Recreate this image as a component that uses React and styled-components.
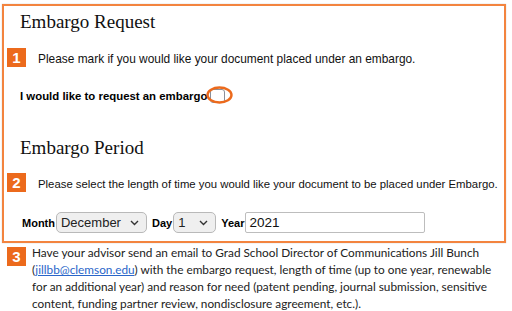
import React from 'react';
import styled, { createGlobalStyle } from 'styled-components';

const GlobalStyle = createGlobalStyle`
    body {
        margin: 0;
        background: #fff;
        font-family: "Liberation Sans", Arial, sans-serif;
        color: #000;
    }
`

const Page = styled.div`
    width: 512px;
    height: 311px;
    padding: 4px 6px 0 2px;
    box-sizing: border-box;
    overflow: hidden;
`

const Box = styled.section`
    border: 2px solid #f3843f;
    box-shadow: 0 0 1px rgba(0,0,0,0.25);
    padding: 5px 0 8px 3px;
    height: 239px;
    box-sizing: border-box;
`

const Heading = styled.h2`
    font-family: "Liberation Serif", "Times New Roman", serif;
    font-weight: normal;
    font-size: 19px;
    line-height: 22px;
    margin: ${p => p.top || 0}px 0 0 13px;
    color: #111;
`

const Step = styled.div`
    display: flex;
    align-items: center;
    gap: 12px;
    margin-top: ${p => p.top || 0}px;
`

const Badge = styled.span`
    display: inline-flex;
    align-items: center;
    justify-content: center;
    flex: none;
    width: 19px;
    height: 19px;
    background: #ec6a1c;
    color: #fff;
    font-family: "Liberation Sans", Arial, sans-serif;
    font-weight: bold;
    font-size: 15px;
`

const Instruction = styled.p`
    margin: 3px 0 0;
    font-size: ${p => p.size || 11.6}px;
    color: #111;
`

const CheckRow = styled.label`
    display: flex;
    align-items: center;
    margin: 22px 0 0 13px;
    font-size: 11.4px;
    font-weight: bold;
`

const CheckWrap = styled.span`
    position: relative;
    display: inline-block;
    width: 13px;
    height: 12px;
    margin-left: 3px;
    border: 1.5px solid #8b8f99;
    border-radius: 3px;
    background: #fff;

    svg {
        position: absolute;
        left: -5px;
        top: -5px;
        overflow: visible;
    }
`

const DateRow = styled.div`
    display: flex;
    align-items: center;
    margin: 20px 0 0 15px;
    font-size: 11px;
    font-weight: bold;
`

const Label = styled.span`
    margin: 0 1px 0 ${p => p.gap || 0}px;
`

const SelectWrap = styled.span`
    position: relative;
    display: inline-block;

    svg {
        position: absolute;
        right: 8px;
        top: 8px;
        pointer-events: none;
    }
`

const Select = styled.select`
    appearance: none;
    width: ${p => p.w}px;
    height: 21px;
    padding: 0 0 0 4px;
    border: 1px solid #b9b9b9;
    border-radius: 5px;
    background: #efefef;
    font-family: "Liberation Sans", Arial, sans-serif;
    font-size: 13px;
    color: #222;
`

const YearInput = styled.input`
    width: 180px;
    height: 21px;
    box-sizing: border-box;
    padding: 0 3px;
    border: 1px solid #bdbdbd;
    border-radius: 2px;
    font-family: "Liberation Sans", Arial, sans-serif;
    font-size: 13.5px;
    color: #111;
`

const Note = styled.div`
    display: flex;
    align-items: flex-start;
    gap: 6px;
    margin: 4px 0 0 5px;
`

const NoteText = styled.p`
    width: 476px;
    margin: -3px 0 0;
    font-family: Lato, "Open Sans", sans-serif;
    font-size: 11.8px;
    line-height: 17px;
    color: #222;

    a {
        color: #2a66c9;
    }
`

const Chevron = () => (
    <svg width="9" height="6" viewBox="0 0 9 6">
        <path d="M1 1l3.5 3.5L8 1" fill="none" stroke="#333" strokeWidth="1.4" />
    </svg>
)

export default function App() {
    return (
        <Page>
            <GlobalStyle />
            <Box>
                <Heading>Embargo Request</Heading>
                <Step top={15}>
                    <Badge>1</Badge>
                    <Instruction size={11.9}>Please mark if you would like your document placed under an embargo.</Instruction>
                </Step>
                <CheckRow>
                    I would like to request an embargo
                    <CheckWrap>
                        <svg width="27" height="20" viewBox="0 0 27 20">
                            <ellipse cx="13.5" cy="10" rx="12" ry="7.5" fill="none" stroke="#ec6a1c" strokeWidth="2.4" />
                        </svg>
                    </CheckWrap>
                </CheckRow>

                <Heading top={34}>Embargo Period</Heading>
                <Step top={14}>
                    <Badge>2</Badge>
                    <Instruction size={11.35}>Please select the length of time you would like your document to be placed under Embargo.</Instruction>
                </Step>
                <DateRow>
                    <Label>Month</Label>
                    <SelectWrap>
                        <Select w={91} defaultValue="December">
                            <option>December</option>
                        </Select>
                        <Chevron />
                    </SelectWrap>
                    <Label gap={5}>Day</Label>
                    <SelectWrap>
                        <Select w={43} defaultValue="1">
                            <option>1</option>
                        </Select>
                        <Chevron />
                    </SelectWrap>
                    <Label gap={5}>Year</Label>
                    <YearInput defaultValue="2021" />
                </DateRow>
            </Box>
            <Note>
                <Badge>3</Badge>
                <NoteText>
                    Have your advisor send an email to Grad School Director of Communications Jill Bunch (<a href="#">jillbb@clemson.edu</a>) with the embargo request, length of time (up to one year, renewable for an additional year) and reason for need (patent pending, journal submission, sensitive content, funding partner review, nondisclosure agreement, etc.).
                </NoteText>
            </Note>
        </Page>
    );
}
